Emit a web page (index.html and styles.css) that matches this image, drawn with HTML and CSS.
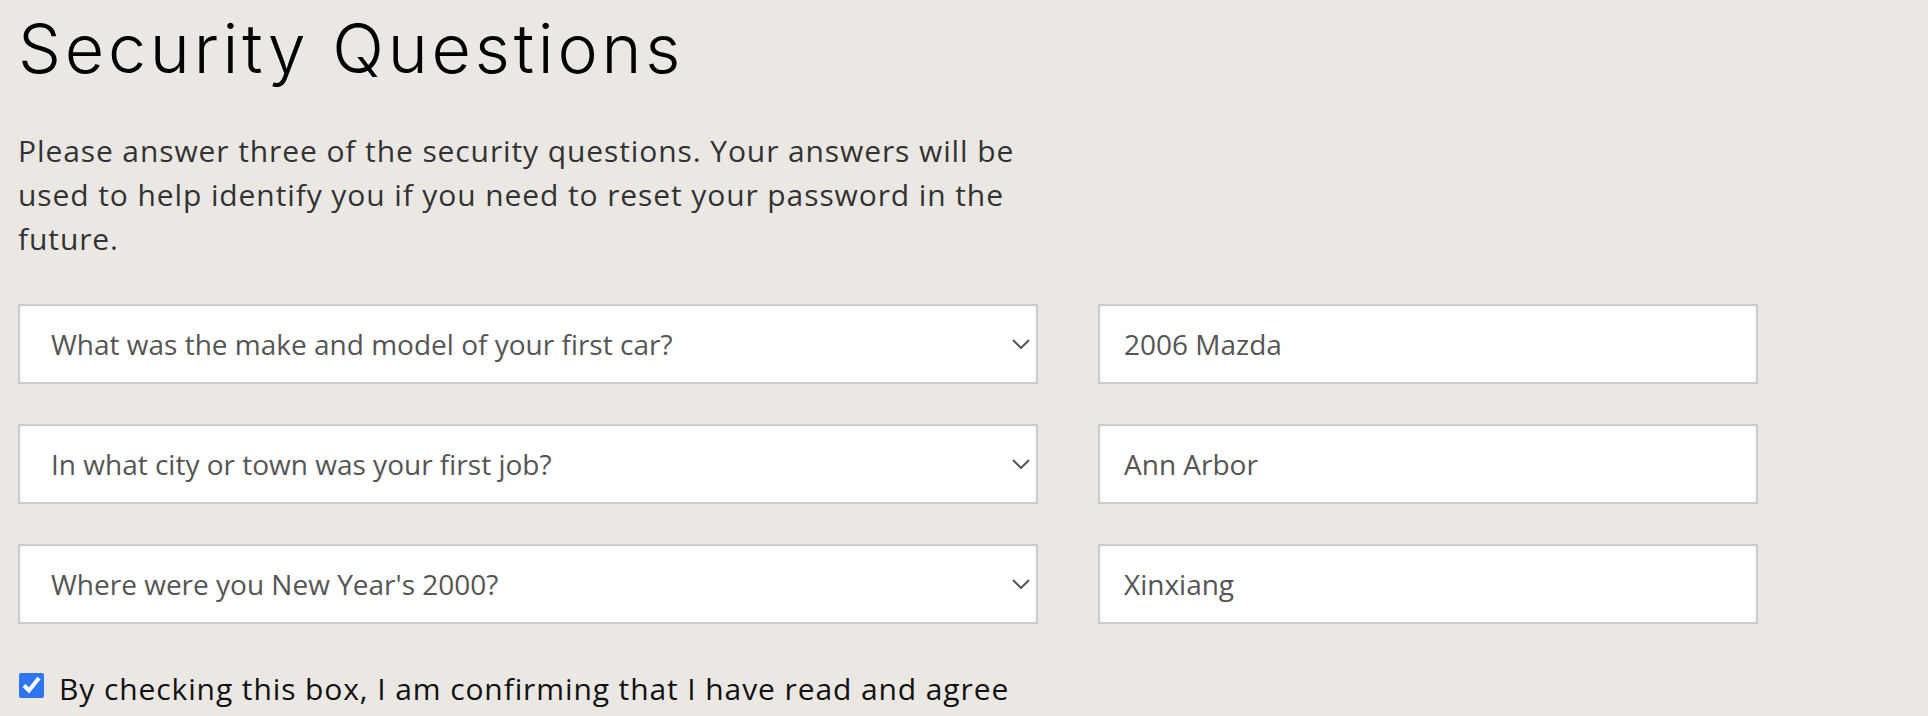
FILE: index.html
```html
<!DOCTYPE html>
<html lang="en">
<head>
<meta charset="utf-8">
<title>Security Questions</title>
<link rel="stylesheet" href="styles.css">
</head>
<body>
<main class="page">
  <h1 class="title">Security Questions</h1>
  <p class="intro">Please answer three of the security questions. Your answers will be used to help identify you if you need to reset your password in the future.</p>
  <div class="qa-grid">
    <div class="select-wrap">
      <select class="question">
        <option>What was the make and model of your first car?</option>
      </select>
      <svg class="chevron" width="18" height="10" viewBox="0 0 18 10"><path d="M1 1 L9 9 L17 1" fill="none" stroke="#555" stroke-width="2"/></svg>
    </div>
    <input class="answer" type="text" value="2006 Mazda">
    <div class="select-wrap">
      <select class="question">
        <option>In what city or town was your first job?</option>
      </select>
      <svg class="chevron" width="18" height="10" viewBox="0 0 18 10"><path d="M1 1 L9 9 L17 1" fill="none" stroke="#555" stroke-width="2"/></svg>
    </div>
    <input class="answer" type="text" value="Ann Arbor">
    <div class="select-wrap">
      <select class="question">
        <option>Where were you New Year's 2000?</option>
      </select>
      <svg class="chevron" width="18" height="10" viewBox="0 0 18 10"><path d="M1 1 L9 9 L17 1" fill="none" stroke="#555" stroke-width="2"/></svg>
    </div>
    <input class="answer" type="text" value="Xinxiang">
  </div>
  <label class="agree">
    <input class="agree-box" type="checkbox" checked>
    <span class="agree-text">By checking this box, I am confirming that I have read and agree to the Terms and Conditions.</span>
  </label>
</main>
</body>
</html>
```
FILE: styles.css
```css
html, body {
  margin: 0;
  padding: 0;
  background: #ebe8e4;
}
.page {
  padding: 7px 18px 40px;
  width: 1020px;
  font-family: "Open Sans", "Noto Sans", sans-serif;
}
.title {
  margin: 0;
  font-family: Inter, "Lato", sans-serif;
  font-weight: 300;
  font-size: 68px;
  line-height: 82px;
  color: #000;
  letter-spacing: 3.8px;
}
.intro {
  margin: 40px 0 0;
  font-size: 30px;
  line-height: 44px;
  color: #333;
  letter-spacing: 0.9px;
}
.qa-grid {
  margin-top: 43px;
  display: grid;
  grid-template-columns: 1020px 660px;
  column-gap: 60px;
  row-gap: 40px;
}
.select-wrap {
  position: relative;
  height: 80px;
}
.question, .answer {
  box-sizing: border-box;
  height: 80px;
  width: 100%;
  margin: 0;
  border: 2px solid #cccccc;
  border-radius: 0;
  background: #fff;
  box-shadow: inset 0 1px 2px rgba(0, 0, 0, 0.06);
  font-family: "Open Sans", "Noto Sans", sans-serif;
  font-size: 28px;
  color: #555;
  outline: none;
}
.question {
  -webkit-appearance: none;
  appearance: none;
  padding: 0 40px 0 31px;
}
.answer {
  padding: 0 24px;
}
.chevron {
  position: absolute;
  right: 8px;
  top: 35px;
  pointer-events: none;
}
.agree {
  margin-top: 43px;
  display: flex;
  align-items: flex-start;
  gap: 15px;
  font-size: 30px;
  line-height: 44px;
  color: #111;
  letter-spacing: 0.9px;
}
.agree-box {
  margin: 6px 0 0 1px;
  width: 25px;
  height: 25px;
  flex: none;
  accent-color: #2f74f0;
}
```
